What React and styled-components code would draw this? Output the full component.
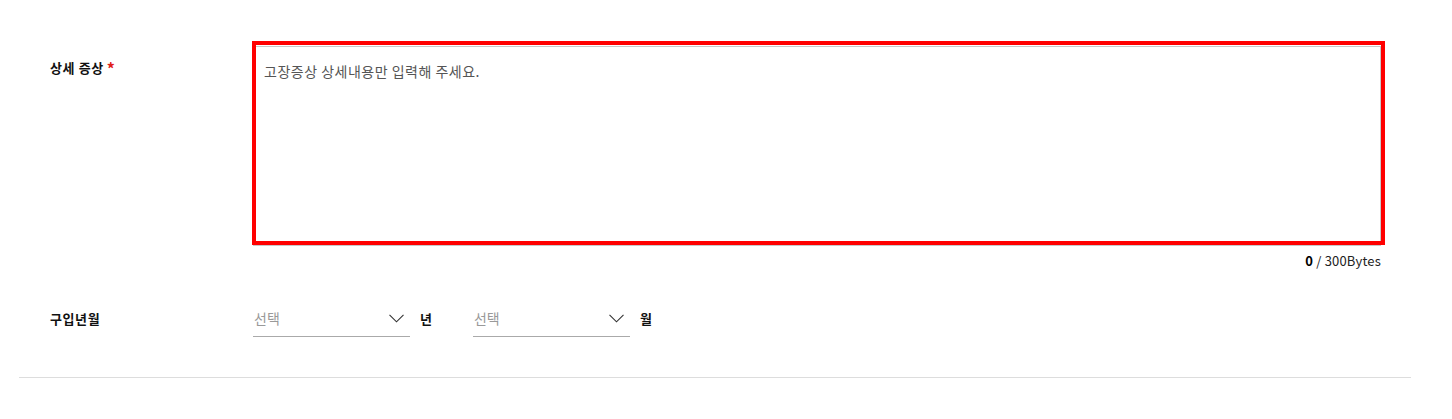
import styled, { createGlobalStyle } from 'styled-components'

const GlobalStyle = createGlobalStyle`
  body {
    margin: 0;
    background: #fff;
    font-family: "Noto Sans CJK KR", "Noto Sans", sans-serif;
    color: #111;
  }
`;

const Section = styled.div`
  margin: 0 41px 0 19px;
  padding: 46px 30px 0 31px;
  border-bottom: 1px solid #dddddd;
  padding-bottom: 40px;
`;

const Row = styled.div`
  display: grid;
  grid-template-columns: 203px 1fr;
  align-items: ${p => (p.$center ? 'center' : 'start')};
  margin-top: ${p => p.$top || 0}px;
`;

const Label = styled.div`
  font-size: 13px;
  font-weight: 700;
  line-height: 20px;
  letter-spacing: 0.6px;
  padding-top: ${p => p.$pad || 0}px;
`;

const Star = styled.span`
  color: #e0201b;
  font-size: 16px;
  margin-left: 3px;
  vertical-align: top;
`;

const Field = styled.div`
  position: relative;
`;

const TextArea = styled.textarea`
  display: block;
  box-sizing: border-box;
  width: 100%;
  height: 200px;
  margin: 0;
  border: 1px solid #c8c8c8;
  padding: 14px 10px;
  resize: none;
  font-family: inherit;
  font-size: 14px;
  letter-spacing: 0.5px;
  line-height: 20px;
  color: #333;
  outline: none;
  &::placeholder {
    color: #555;
  }
`;

const Highlight = styled.div`
  position: absolute;
  top: -5px;
  left: -1px;
  right: -4px;
  bottom: 1px;
  border: 4px solid #ff0000;
  pointer-events: none;
`;

const Counter = styled.div`
  margin-top: 7px;
  text-align: right;
  font-size: 13px;
  line-height: 16px;
  color: #222;
  letter-spacing: 0.2px;
  b {
    font-weight: 700;
    color: #000;
  }
`;

const Selects = styled.div`
  display: flex;
  align-items: center;
  gap: 41px;
`;

const Unit = styled.div`
  display: flex;
  align-items: center;
  gap: 10px;
`;

const Select = styled.div`
  box-sizing: border-box;
  width: 157px;
  height: 37px;
  border-bottom: 1px solid #aaaaaa;
  display: flex;
  align-items: center;
  justify-content: space-between;
  padding: 0 6px 0 1px;
  font-size: 14px;
  color: #999;
`;

const Suffix = styled.span`
  font-size: 13px;
  font-weight: 700;
  color: #111;
`;

const Chevron = () => (
  <svg width="15" height="9" viewBox="0 0 15 9">
    <polyline points="0.5,0.8 7.5,7.8 14.5,0.8" fill="none" stroke="#333" strokeWidth="1.1" />
  </svg>
);

const App = () => {
  return (
    <>
      <GlobalStyle />
      <Section>
        <Row>
          <Label $pad={12}>
            상세 증상<Star>*</Star>
          </Label>
          <div>
            <Field>
              <TextArea placeholder="고장증상 상세내용만 입력해 주세요." />
              <Highlight />
            </Field>
            <Counter>
              <b>0</b> / 300Bytes
            </Counter>
          </div>
        </Row>
        <Row $center $top={31}>
          <Label>구입년월</Label>
          <Selects>
            <Unit>
              <Select>
                선택
                <Chevron />
              </Select>
              <Suffix>년</Suffix>
            </Unit>
            <Unit>
              <Select>
                선택
                <Chevron />
              </Select>
              <Suffix>월</Suffix>
            </Unit>
          </Selects>
        </Row>
      </Section>
    </>
  )
}

export default App
